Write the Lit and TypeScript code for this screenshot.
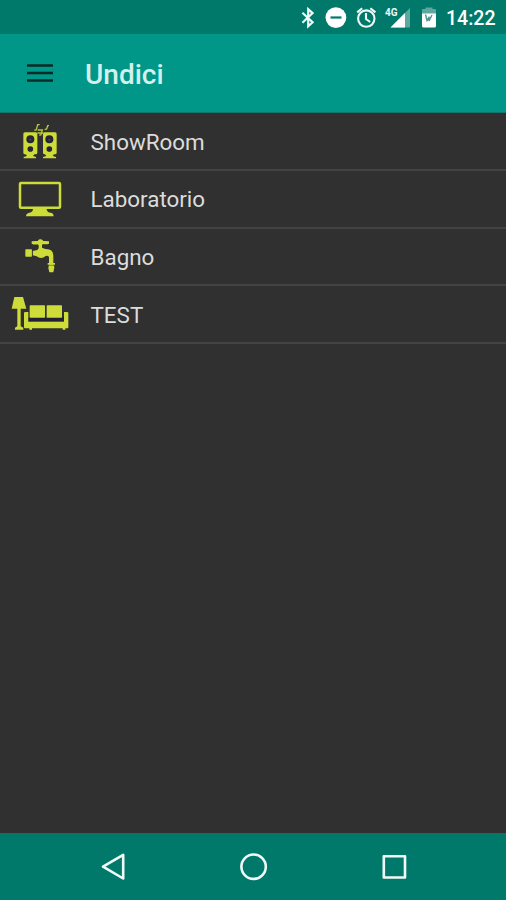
import { LitElement, html, svg, css } from "lit";
import { customElement } from "lit/decorators.js";

const speakers = svg`
  <g fill="#cddc39">
    <path d="M75 66h32q5 0 5 5v56q0 5-5 5h-4l-4 5 9 3v4H71v-4l10-3-4-5h-2q-5 0-5-5V71q0-5 5-5z"/>
    <path d="M134 66h31q5 0 5 5v56q0 5-5 5h-3l-4 5 10 3v4h-39v-4l10-3-4-5h-1q-5 0-5-5V71q0-5 5-5z"/>
    <g stroke="#b9c738" stroke-width="4" fill="none">
      <path d="M103 60l6-2 4-15h6M118 75l5-2 4-14h-14M134 58l6-2 3-10h4M112 68h18"/>
    </g>
  </g>
  <g fill="#252535"><circle cx="91" cy="87" r="12"/><circle cx="91" cy="116" r="8.5"/><circle cx="148" cy="87" r="12"/><circle cx="148" cy="116" r="8.5"/></g>
  <g fill="#454c30"><circle cx="91" cy="88" r="3"/><circle cx="148" cy="88" r="3"/></g>`;

const monitor = svg`
  <rect x="60" y="44" width="120" height="74" rx="3" fill="none" stroke="#cddc39" stroke-width="7.5"/>
  <path fill="#cddc39" d="M99 120h41q-1 12 11 13 10 1 10 11H78q0-9 10-11 12-1 11-13z"/>`;

const tap = svg`
  <g fill="#cddc39">
    <path d="M95 45q10-2 18-1 3-6 8-5 5-1 9 5 8-1 17 1v7q-9 3-18 1l-3 3v8l10 4q23-1 24 19v23h5v5h-5q3 5 3 9l-3 14h-12l-3-13q0-5 3-10h-5v-5h4V92q-3-5-10-3-13 12-27 1l-12-3V74l14-3 4-5V57l-4-3q-8 2-17-2z"/>
    <rect x="76" y="69" width="20" height="22" rx="2"/>
  </g>
  <path d="M97 70v20" stroke="#303030" stroke-width="2"/>
  <path d="M144 117h20" stroke="#66702e" stroke-width="2"/>`;

const sofa = svg`
  <g fill="#cddc39">
    <path d="M43 41h26l10 35H62v53l8 4v6H45v-6l7-4V76H35z"/>
    <rect x="89" y="66" width="46" height="38" rx="2"/>
    <rect x="140" y="66" width="46" height="38" rx="2"/>
    <path d="M72 89q0-3 4-3h9v29h107V86h9q4 0 4 3v43q0 3-3 3h-6v4h-8v-4H96v4h-8v-4H75q-3 0-3-3z"/>
  </g>
  <path d="M86 103h105v10H86z" fill="#202032"/>`;

const rooms = [
  { name: "ShowRoom", icon: speakers },
  { name: "Laboratorio", icon: monitor },
  { name: "Bagno", icon: tap },
  { name: "TEST", icon: sofa },
];

@customElement("app-root")
export class AppRoot extends LitElement {
  static styles = css`
    :host {
      display: flex;
      flex-direction: column;
      height: 900px;
      background: #303030;
      font-family: Roboto, sans-serif;
      overflow: hidden;
    }
    svg { display: block; flex: none; }
    .status {
      height: 34px;
      flex: none;
      display: flex;
      padding-left: 300px;
      background: #00796b;
      color: #fff;
    }
    .time {
      margin-left: 4px;
      font-size: 19.5px;
      font-weight: 500;
      line-height: 37px;
      white-space: nowrap;
    }
    .bar {
      height: 79px;
      flex: none;
      box-sizing: border-box;
      display: flex;
      align-items: center;
      padding-left: 27px;
      background: #009688;
      border-bottom: 1px solid #14756c;
    }
    .title {
      margin: 3px 0 0 32px;
      font-size: 28px;
      font-weight: 500;
      color: #d5efeb;
    }
    .rooms { flex: 1; padding-top: 0.4px; }
    .room {
      height: 57.6px;
      box-sizing: border-box;
      display: flex;
      align-items: flex-start;
      border-bottom: 2px solid #434343;
    }
    .name {
      margin: 0.4px 0 0 10.5px;
      font-size: 22.4px;
      line-height: 57px;
      color: #dcdcdc;
    }
    .nav {
      height: 67px;
      flex: none;
      display: flex;
      align-items: center;
      justify-content: center;
      background: #00796b;
    }
  `;

  render() {
    return html`
      <div class="status">
        <svg width="20" height="34" viewBox="300 0 20 34"><path d="M302.4 12.7l10.2 9.6-4.4 3.9V9.2l4.4 3.9-10.2 9.6" fill="none" stroke="#eefaf8" stroke-width="2.2"/></svg>
        <svg width="30" height="34" viewBox="320 0 30 34"><circle cx="335.9" cy="17.6" r="10.4" fill="#fff"/><path d="M330.5 17.5h11" stroke="#00796b" stroke-width="2.2"/></svg>
        <svg width="30" height="34" viewBox="350 0 30 34"><g fill="none" stroke="#eefaf8" stroke-width="2.1"><circle cx="366.3" cy="18.6" r="8.2"/><path d="M357.2 12.4l5-4.2M375.4 12.4l-5-4.2M366 13v6l4.2 3"/></g></svg>
        <svg width="35" height="34" viewBox="380 0 35 34">
          <path d="M410 8v19.5h-19.5z" fill="#5da89f"/><path d="M405 13v14.5h-14.5z" fill="#fff"/>
          <text x="385" y="16.3" font-size="10.5" font-weight="700" fill="#eefaf8" textLength="12.5" lengthAdjust="spacingAndGlyphs">4G</text>
        </svg>
        <svg width="27" height="34" viewBox="415 0 27 34">
          <path d="M422 14v-4q0-1 1-1h2.5V7.5h7V9h2.5q1 0 1 1v4z" fill="#5da89f"/>
          <path d="M422 13.5h14V26q0 1.5-1.5 1.5h-11q-1.5 0-1.5-1.5z" fill="#fff"/>
          <path d="M425.5 14.5l1.5 6 2-3M429 16.5v4.5l3-6" fill="none" stroke="#4f958c" stroke-width="1.4"/>
        </svg>
        <span class="time">14:22</span>
      </div>
      <div class="bar">
        <svg width="26" height="20" viewBox="0 0 26 20"><path d="M0 2.5h26M0 10h26M0 17.5h26" stroke="#052b27" stroke-width="2.5"/></svg>
        <div class="title">Undici</div>
      </div>
      <div class="rooms">
        ${rooms.map((r) => html`
          <div class="room">
            <svg width="80" height="56" viewBox="0 8 240 168">${r.icon}</svg>
            <span class="name">${r.name}</span>
          </div>`)}
      </div>
      <div class="nav">
        <svg width="506" height="67" viewBox="0 833 506 67"><g fill="none" stroke="#f0faf8" stroke-width="2.6" stroke-linejoin="round"><path d="M123.2 854.8v23.7l-20.2-11.8z"/><circle cx="253.6" cy="866.7" r="12.2"/><rect x="383.8" y="856.3" width="21.2" height="21.2"/></g></svg>
      </div>`;
  }
}
